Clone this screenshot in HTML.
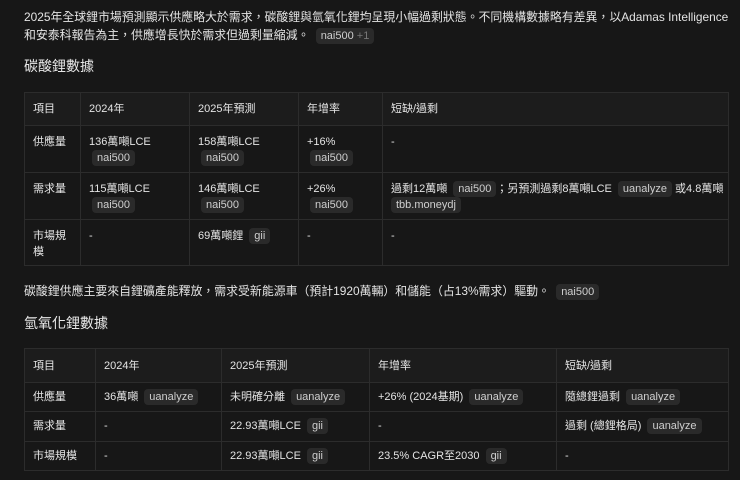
<!DOCTYPE html>
<html><head><meta charset="utf-8"><style>
*{margin:0;padding:0;box-sizing:border-box}
body{width:740px;height:480px;background:#171717;color:#e4e4e4;font-family:"Liberation Sans","Noto Sans CJK TC",sans-serif;overflow:hidden;position:relative}
.p{position:absolute;left:24px;font-size:11.9px;line-height:18px;width:716px;white-space:nowrap}
.h{position:absolute;left:24px;font-size:14px;color:#e8e8e8}
.c{display:inline-block;background:#2a2a2a;color:#cfcfcf;border-radius:4px;padding:0 5px;font-size:11px;line-height:16px;margin-left:3px}
.c s{text-decoration:none;color:#777}
table{position:absolute;left:24px;width:705px;border-collapse:collapse;table-layout:fixed;font-size:11px}
td{border:1px solid #2c2c2c;vertical-align:top;padding:8px 8px 0 8px;line-height:16px}
tr.hd td{background:#1c1c1c;vertical-align:middle;padding-top:0}
.nw{white-space:nowrap}
</style></head><body>
<div class="p" style="top:8px">2025年全球鋰市場預測顯示供應略大於需求，碳酸鋰與氫氧化鋰均呈現小幅過剩狀態。不同機構數據略有差異，以Adamas Intelligence<br>和安泰科報告為主，供應增長快於需求但過剩量縮減。 <span class="c">nai500 <s>+1</s></span></div>
<div class="h" style="top:56px">碳酸鋰數據</div>
<table style="top:92px">
<colgroup><col style="width:56px"><col style="width:109px"><col style="width:109px"><col style="width:84px"><col></colgroup>
<tr class="hd" style="height:33px"><td>項目</td><td>2024年</td><td>2025年預測</td><td>年增率</td><td>短缺/過剩</td></tr>
<tr style="height:47px"><td>供應量</td><td>136萬噸LCE<br><span class="c">nai500</span></td><td>158萬噸LCE<br><span class="c">nai500</span></td><td>+16%<br><span class="c">nai500</span></td><td>-</td></tr>
<tr style="height:47px"><td>需求量</td><td>115萬噸LCE<br><span class="c">nai500</span></td><td>146萬噸LCE<br><span class="c">nai500</span></td><td>+26%<br><span class="c">nai500</span></td><td><span class="nw">過剩12萬噸 <span class="c">nai500</span>；另預測過剩8萬噸LCE <span class="c">uanalyze</span> 或4.8萬噸</span><br><span class="c" style="margin-left:0">tbb.moneydj</span></td></tr>
<tr style="height:46px"><td>市場規模</td><td>-</td><td>69萬噸鋰 <span class="c">gii</span></td><td>-</td><td>-</td></tr>
</table>
<div class="p" style="top:282px">碳酸鋰供應主要來自鋰礦產能釋放，需求受新能源車（預計1920萬輛）和儲能（占13%需求）驅動。 <span class="c">nai500</span></div>
<div class="h" style="top:313px">氫氧化鋰數據</div>
<table style="top:348px">
<colgroup><col style="width:71px"><col style="width:126px"><col style="width:148px"><col style="width:187px"><col></colgroup>
<tr class="hd" style="height:34px"><td>項目</td><td>2024年</td><td>2025年預測</td><td>年增率</td><td>短缺/過剩</td></tr>
<tr style="height:29px"><td style="padding-top:6px">供應量</td><td style="padding-top:6px">36萬噸 <span class="c">uanalyze</span></td><td style="padding-top:6px">未明確分離 <span class="c">uanalyze</span></td><td style="padding-top:6px">+26% (2024基期) <span class="c">uanalyze</span></td><td style="padding-top:6px">隨總鋰過剩 <span class="c">uanalyze</span></td></tr>
<tr style="height:30px"><td style="padding-top:6px">需求量</td><td style="padding-top:6px">-</td><td style="padding-top:6px">22.93萬噸LCE <span class="c">gii</span></td><td style="padding-top:6px">-</td><td style="padding-top:6px">過剩 (總鋰格局) <span class="c">uanalyze</span></td></tr>
<tr style="height:29px"><td style="padding-top:6px">市場規模</td><td style="padding-top:6px">-</td><td style="padding-top:6px">22.93萬噸LCE <span class="c">gii</span></td><td style="padding-top:6px">23.5% CAGR至2030 <span class="c">gii</span></td><td style="padding-top:6px">-</td></tr>
</table>
</body></html>
